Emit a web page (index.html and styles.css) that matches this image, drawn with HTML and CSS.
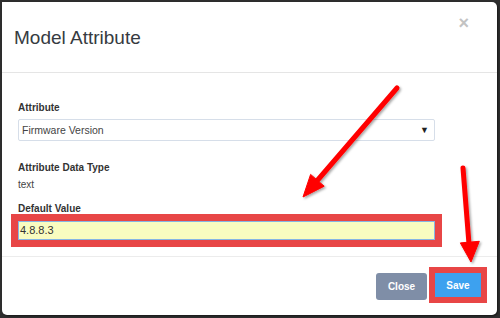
FILE: index.html
```html
<!DOCTYPE html>
<html>
<head>
<meta charset="utf-8">
<link rel="stylesheet" href="styles.css">
</head>
<body>
<div class="modal">
  <div class="modal-header">
    <h4 class="modal-title">Model Attribute</h4>
    <span class="close-x">×</span>
  </div>
  <div class="modal-body">
    <div class="group">
      <div class="label">Attribute</div>
      <div class="select">
        <span>Firmware Version</span>
        <span class="caret">▼</span>
      </div>
    </div>
    <div class="group">
      <div class="label">Attribute Data Type</div>
      <div class="static">text</div>
    </div>
    <div class="group">
      <div class="label">Default Value</div>
      <div class="input highlight">4.8.8.3</div>
    </div>
  </div>
  <div class="modal-footer">
    <button class="btn btn-close">Close</button>
    <button class="btn btn-save highlight-btn">Save</button>
  </div>
</div>
<svg class="arrows" width="500" height="318" viewBox="0 0 500 318">
  <defs>
    <filter id="sh" x="-20%" y="-20%" width="140%" height="140%">
      <feDropShadow dx="1.5" dy="1.5" stdDeviation="1" flood-color="#000" flood-opacity="0.35"/>
    </filter>
  </defs>
  <g filter="url(#sh)" fill="#f00" stroke="#f00">
    <line x1="397" y1="88" x2="316" y2="182" stroke-width="5" stroke-linecap="round"/>
    <polygon points="303,197 310.6,174.4 324.2,186.2" stroke-width="1" stroke-linejoin="round"/>
    <line x1="463" y1="168" x2="469" y2="244" stroke-width="5" stroke-linecap="round"/>
    <polygon points="471,262 460.3,242.9 479.3,241.3" stroke-width="1" stroke-linejoin="round"/>
  </g>
</svg>
</body>
</html>
```

FILE: styles.css
```css
html, body {
  margin: 0;
  padding: 0;
}
body {
  width: 500px;
  height: 318px;
  background: #2e2e2e;
  font-family: "Liberation Sans", Arial, sans-serif;
  position: relative;
  overflow: hidden;
}
.modal {
  margin: 2px 3px 0 2px;
  height: 313px;
  background: #fff;
  border-radius: 0 5px 5px 5px;
  display: flex;
  flex-direction: column;
  box-shadow: 1px 1px 2px rgba(0,0,0,0.5);
}
.modal-header {
  height: 70px;
  border-bottom: 1px solid #e5e5e5;
  display: flex;
  align-items: center;
  justify-content: space-between;
  padding: 0 28px 0 12px;
  position: relative;
}
.modal-title {
  margin: 0;
  font-size: 19px;
  font-weight: normal;
  color: #363b41;
  padding-top: 2px;
}
.close-x {
  position: absolute;
  right: 28px;
  top: 11px;
  font-size: 18px;
  font-weight: bold;
  color: #c3c3c3;
  line-height: 20px;
}
.modal-body {
  padding: 28px 62px 0 16px;
  height: 155px;
  border-bottom: 1px solid #ececec;
}
.group-first {
  margin-bottom: 20px;
}
.group:nth-child(1) {
  margin-bottom: 20px;
}
.group:nth-child(2) {
  margin-bottom: 10px;
}
.label {
  font-size: 10px;
  font-weight: bold;
  color: #333;
  line-height: 14px;
  margin-bottom: 4px;
}
.group:nth-child(2) .label {
  margin-bottom: 3px;
}
.group:nth-child(3) .label {
  margin-bottom: 5px;
}
.select {
  height: 20px;
  border: 1px solid #d6dee9;
  border-radius: 2px;
  display: flex;
  align-items: center;
  justify-content: space-between;
  padding: 0 5px 0 3px;
  font-size: 10.5px;
  color: #444;
}
.caret {
  font-size: 9px;
  color: #222;
}
.static {
  font-size: 10px;
  color: #444;
  line-height: 14px;
}
.input {
  height: 17px;
  border: 1px solid #86b5e4;
  background: #f9fcc0;
  font-size: 11px;
  color: #333;
  line-height: 17px;
  padding-left: 1px;
}
.highlight {
  box-shadow: 0 0 0 7px #e84646;
}
.modal-footer {
  flex: 1;
  display: flex;
  justify-content: flex-end;
  align-items: flex-start;
  gap: 8px;
  padding: 16px 16px 0 0;
}
.btn {
  border: none;
  font-family: "Liberation Sans", Arial, sans-serif;
  font-size: 10px;
  font-weight: bold;
  color: #fff;
  padding: 0;
}
.btn-close {
  width: 51px;
  height: 27px;
  background: #7f8ea7;
  border-radius: 3px;
}
.btn-save {
  width: 46px;
  height: 24px;
  background: #3da1ef;
}
.highlight-btn {
  outline: 6px solid #e84646;
}
.arrows {
  position: absolute;
  left: 0;
  top: 0;
}
```
